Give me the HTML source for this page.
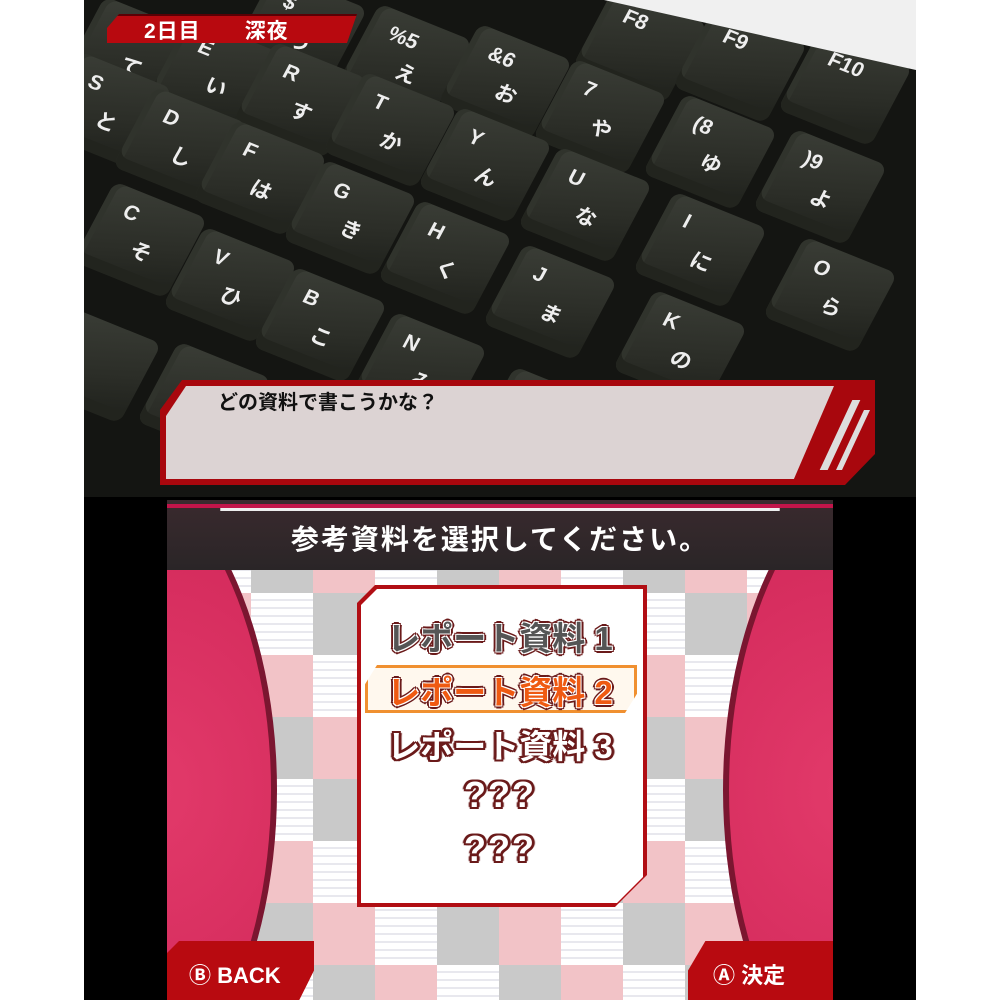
<!DOCTYPE html>
<html><head><meta charset="utf-8"><style>
*{margin:0;padding:0;box-sizing:border-box}
body{width:1000px;height:1000px;background:#fff;position:relative;overflow:hidden;font-family:"Liberation Sans","Noto Sans CJK JP",sans-serif}
#top{position:absolute;left:84px;top:0;width:832px;height:497px;background:#141512;overflow:hidden}
.key{position:absolute;width:100px;height:90px;margin:-45px 0 0 -50px;border-radius:10px;background:linear-gradient(160deg,#3a3d36,#2b2d27 60%,#1e201b);box-shadow:inset 0 -12px 0 #22241e,inset 6px 0 0 #30332c;transform:rotate(22deg) skewX(-6deg);color:#eee;font-weight:bold;font-size:21px}
.key span{position:absolute;left:22px;top:12px}
.key i{position:absolute;left:46px;top:40px;font-style:normal}
#bot{position:absolute;left:84px;top:497px;width:832px;height:503px;background:#000}
#scr{position:absolute;left:167px;top:500px;width:666px;height:500px;overflow:hidden;background:#fff}
.cell{position:absolute;width:62px;height:62px}
.w{background:repeating-linear-gradient(#fff 0 6px,#e8e8ee 6px 8px)}
.p{background:#f2c3c7}
.g{background:#c9c9c9}
.out{font-weight:bold;text-align:center;position:absolute;left:0;width:666px;font-size:33px;color:#555;text-shadow:1px 1px 0 #fff,-1px -1px 0 #fff,1px -1px 0 #fff,-1px 1px 0 #fff,3px 0 0 #6a1a1a,-3px 0 0 #6a1a1a,0 3px 0 #6a1a1a,0 -3px 0 #6a1a1a,2px 2px 0 #6a1a1a,-2px -2px 0 #6a1a1a,2px -2px 0 #6a1a1a,-2px 2px 0 #6a1a1a}
.wt{color:#fff;text-shadow:2px 0 0 #6a1a1a,-2px 0 0 #6a1a1a,0 2px 0 #6a1a1a,0 -2px 0 #6a1a1a,2px 2px 0 #6a1a1a,-2px -2px 0 #6a1a1a,2px -2px 0 #6a1a1a,-2px 2px 0 #6a1a1a,3px 0 1px #6a1a1a,-3px 0 1px #6a1a1a}
</style></head><body>
<div id="top">
<div class="key" style="left:556px;top:45px"><span>F8</span></div>
<div class="key" style="left:656px;top:65px"><span>F9</span></div>
<div class="key" style="left:761px;top:88px"><span>F10</span></div>
<div class="key" style="left:216px;top:30px"><span>$</span><i>う</i></div>
<div class="key" style="left:321px;top:62px"><span>%5</span><i>え</i></div>
<div class="key" style="left:421px;top:82px"><span>&amp;6</span><i>お</i></div>
<div class="key" style="left:516px;top:117px"><span>7</span><i>や</i></div>
<div class="key" style="left:626px;top:152px"><span>(8</span><i>ゆ</i></div>
<div class="key" style="left:736px;top:187px"><span>)9</span><i>よ</i></div>
<div class="key" style="left:46px;top:55px"><span>W</span><i>て</i></div>
<div class="key" style="left:131px;top:75px"><span>E</span><i>い</i></div>
<div class="key" style="left:216px;top:100px"><span>R</span><i>す</i></div>
<div class="key" style="left:306px;top:130px"><span>T</span><i>か</i></div>
<div class="key" style="left:401px;top:165px"><span>Y</span><i>ん</i></div>
<div class="key" style="left:501px;top:205px"><span>U</span><i>な</i></div>
<div class="key" style="left:616px;top:250px"><span>I</span><i>に</i></div>
<div class="key" style="left:746px;top:295px"><span>O</span><i>ら</i></div>
<div class="key" style="left:21px;top:110px"><span>S</span><i>と</i></div>
<div class="key" style="left:96px;top:145px"><span>D</span><i>し</i></div>
<div class="key" style="left:176px;top:178px"><span>F</span><i>は</i></div>
<div class="key" style="left:266px;top:218px"><span>G</span><i>き</i></div>
<div class="key" style="left:361px;top:258px"><span>H</span><i>く</i></div>
<div class="key" style="left:466px;top:302px"><span>J</span><i>ま</i></div>
<div class="key" style="left:596px;top:348px"><span>K</span><i>の</i></div>
<div class="key" style="left:56px;top:240px"><span>C</span><i>そ</i></div>
<div class="key" style="left:146px;top:285px"><span>V</span><i>ひ</i></div>
<div class="key" style="left:236px;top:325px"><span>B</span><i>こ</i></div>
<div class="key" style="left:336px;top:370px"><span>N</span><i>み</i></div>
<div class="key" style="left:456px;top:425px"><span>M</span><i>も</i></div>
<div class="key" style="left:10px;top:365px"></div>
<div class="key" style="left:120px;top:400px"></div>
<div style="position:absolute;left:0;top:0;width:832px;height:100px;background:#f0f0f0;clip-path:polygon(520px 0,832px 0,832px 70px)"></div>
<div style="position:absolute;left:23px;top:14px;width:250px;height:29px;background:#b8090f;clip-path:polygon(12px 0,100% 0,calc(100% - 10px) 100%,0 100%,0 14px);border-top:2px solid #5a0005"></div>
<div style="position:absolute;left:60px;top:15px;color:#fff;font-weight:bold;font-size:21px;letter-spacing:1px">2日目　　深夜</div>
<div style="position:absolute;left:76px;top:380px;width:715px;height:105px;background:#a8070d;clip-path:polygon(22px 0,100% 0,100% 74px,calc(100% - 30px) 100%,0 100%,0 30px)"></div>
<div style="position:absolute;left:82px;top:386px;width:668px;height:93px;background:rgba(222,222,222,.95);clip-path:polygon(20px 0,100% 0,94% 100%,0 100%,0 30px)"></div>
<div style="position:absolute;left:752px;top:400px;width:8px;height:70px;background:#ddd;transform:skewX(-25deg)"></div>
<div style="position:absolute;left:766px;top:410px;width:6px;height:60px;background:#ddd;transform:skewX(-25deg)"></div>
<div style="position:absolute;left:134px;top:386px;color:#111;font-weight:bold;font-size:20px">どの資料で書こうかな？</div>
</div>
<div id="bot"></div>
<div id="scr">
<div id="grid"></div>
<div style="position:absolute;left:-300px;top:-60px;width:410px;height:700px;border-radius:50%;background:radial-gradient(ellipse at 70% 50%,#e23a6a,#c81e50);border:6px solid #7b1630"></div>
<div style="position:absolute;left:556px;top:-60px;width:410px;height:700px;border-radius:50%;background:radial-gradient(ellipse at 30% 50%,#e23a6a,#c81e50);border:6px solid #7b1630"></div>
<div style="position:absolute;left:0;top:0;width:666px;height:70px;background:linear-gradient(#3a2a2e,#2a2527)"></div>
<div style="position:absolute;left:0;top:4px;width:666px;height:4px;background:#c2154a"></div>
<div style="position:absolute;left:0;top:8px;width:666px;height:3px;background:#eee;clip-path:polygon(8% 0,92% 0,92% 100%,8% 100%)"></div>
<div style="position:absolute;left:0;top:18px;width:666px;text-align:center;color:#fff;font-weight:bold;font-size:28px;letter-spacing:2px">参考資料を選択してください。</div>
<div style="position:absolute;left:190px;top:85px;width:290px;height:322px;background:#b10e14;clip-path:polygon(18px 0,100% 0,100% 290px,258px 100%,0 100%,0 18px)"></div>
<div style="position:absolute;left:194px;top:89px;width:282px;height:314px;background:#fff;clip-path:polygon(16px 0,100% 0,100% 288px,256px 100%,0 100%,0 16px)"></div>
<div style="position:absolute;left:198px;top:165px;width:272px;height:48px;border:3px solid #f09030;background:#fff8ee;clip-path:polygon(12px 0,100% 0,100% 60%,calc(100% - 12px) 100%,0 100%,0 40%)"></div>
<div class="out" style="top:112px">レポート資料 1</div>
<div class="out" style="top:166px;color:#ef5a12">レポート資料 2</div>
<div class="out wt" style="top:220px">レポート資料 3</div>
<div class="out wt" style="top:274px;font-size:36px;letter-spacing:2px">???</div>
<div class="out wt" style="top:328px;font-size:36px;letter-spacing:2px">???</div>
<div style="position:absolute;left:0;top:441px;width:147px;height:59px;background:#b80a10;clip-path:polygon(0 12px,12px 0,100% 0,100% 50%,90% 100%,0 100%)"></div>
<div style="position:absolute;left:22px;top:458px;color:#fff;font-weight:bold;font-size:22px">Ⓑ BACK</div>
<div style="position:absolute;left:521px;top:441px;width:145px;height:59px;background:#b80a10;clip-path:polygon(12% 0,100% 0,100% 100%,0 100%,0 50%)"></div>
<div style="position:absolute;left:546px;top:458px;color:#fff;font-weight:bold;font-size:22px">Ⓐ 決定</div>
</div>
<script>
var g=document.getElementById('grid'),c=['w','g','p'],h='';
for(var r=0;r<10;r++)for(var k=0;k<12;k++){h+='<div class="cell '+c[(k+r*2)%3]+'" style="left:'+(22+k*62-62)+'px;top:'+(31+r*62-62)+'px"></div>';}
g.innerHTML=h;
</script>
</body></html>
